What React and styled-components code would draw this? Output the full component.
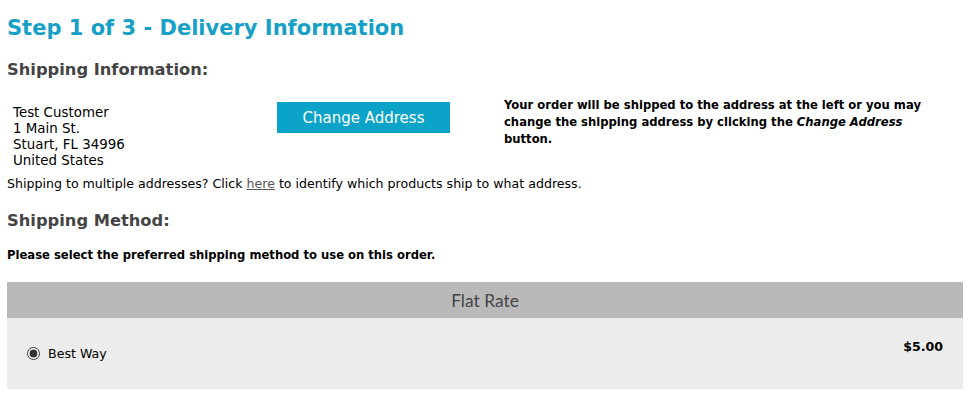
import styled, { createGlobalStyle } from 'styled-components';

const GlobalStyle = createGlobalStyle`
  body {
    margin: 0;
    background: #fff;
    font-family: 'DejaVu Sans', Verdana, sans-serif;
    color: #000;
  }
`;

const Page = styled.div`
  padding: 0 8px 0 7px;
`;

const Title = styled.h1`
  margin: 0;
  padding-top: 14px;
  font-size: 21px;
  line-height: 28px;
  font-weight: bold;
  color: #17a0c6;
`;

const SectionHeading = styled.h2`
  margin: ${p => p.$top}px 0 0;
  font-size: 16.3px;
  line-height: 22px;
  font-weight: bold;
  color: #444;
`;

const AddressRow = styled.div`
  display: flex;
  align-items: flex-start;
  margin-top: 18px;
`;

const Address = styled.div`
  width: 270px;
  padding: 6px 0 0 6px;
  box-sizing: border-box;
  font-size: 13.4px;
  line-height: 16px;
`;

const ButtonCell = styled.div`
  width: 227px;
  padding-top: 3px;
`;

const ChangeButton = styled.button`
  width: 173px;
  height: 31px;
  border: 0;
  background: #0ba3c8;
  color: #fff;
  font-family: inherit;
  font-size: 15px;
  cursor: pointer;
`;

const Note = styled.p`
  margin: -2px 0 0;
  width: 440px;
  font-size: 11.6px;
  line-height: 17px;
  font-weight: bold;
`;

const Small = styled.p`
  margin: ${p => p.$top}px 0 0;
  font-size: ${p => (p.$bold ? 11.6 : 12.6)}px;
  line-height: 16px;
  font-weight: ${p => (p.$bold ? 'bold' : 'normal')};
  a {
    color: #555;
  }
`;

const RateTable = styled.div`
  margin-top: 19px;
  width: 956px;
`;

const RateHeader = styled.div`
  height: 36px;
  display: flex;
  align-items: center;
  justify-content: center;
  background: #b9b9b9;
  color: #444;
  font-family: Lato, 'Open Sans', sans-serif;
  font-size: 17.4px;
`;

const RateRow = styled.div`
  height: 71px;
  display: flex;
  justify-content: space-between;
  background: #ececec;
  padding: 0 20px 0 20px;
  box-sizing: border-box;
`;

const Option = styled.label`
  display: flex;
  align-items: center;
  gap: 8px;
  font-size: 12.6px;
  margin-top: 27px;
  height: 16px;
  input {
    margin: 0;
    width: 13px;
    height: 13px;
    accent-color: #333;
  }
`;

const Price = styled.div`
  font-size: 12.6px;
  font-weight: bold;
  margin-top: 21px;
`;

export default function App() {
  return (
    <>
      <GlobalStyle />
      <Page>
        <Title>Step 1 of 3 - Delivery Information</Title>
        <SectionHeading $top={17}>Shipping Information:</SectionHeading>
        <AddressRow>
          <Address>
            Test Customer
            <br />
            1 Main St.
            <br />
            Stuart, FL 34996
            <br />
            United States
          </Address>
          <ButtonCell>
            <ChangeButton>Change Address</ChangeButton>
          </ButtonCell>
          <Note>
            Your order will be shipped to the address at the left or you may
            change the shipping address by clicking the <i>Change Address</i>{' '}
            button.
          </Note>
        </AddressRow>
        <Small $top={7}>
          Shipping to multiple addresses? Click <a href="#">here</a> to identify
          which products ship to what address.
        </Small>
        <SectionHeading $top={18}>Shipping Method:</SectionHeading>
        <Small $top={15} $bold>
          Please select the preferred shipping method to use on this order.
        </Small>
        <RateTable>
          <RateHeader>Flat Rate</RateHeader>
          <RateRow>
            <Option>
              <input type="radio" name="ship" defaultChecked />
              Best Way
            </Option>
            <Price>$5.00</Price>
          </RateRow>
        </RateTable>
      </Page>
    </>
  );
}
